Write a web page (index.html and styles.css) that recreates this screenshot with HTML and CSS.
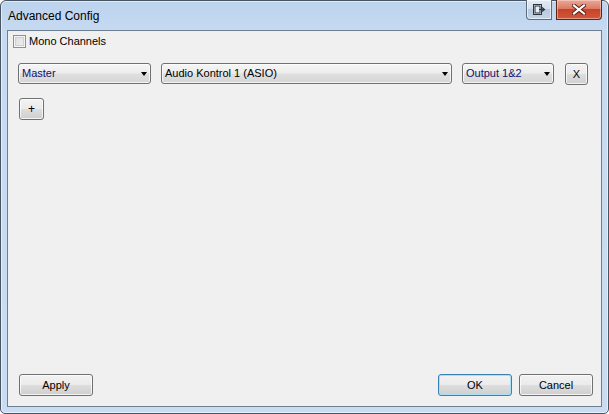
FILE: index.html
```html
<!DOCTYPE html>
<html>
<head>
<meta charset="utf-8">
<link rel="stylesheet" href="styles.css">
</head>
<body>
<div class="window">
  <div class="titlebar">
    <span class="title">Advanced Config</span>
    <div class="caption-buttons">
      <div class="cap-btn cap-extra">
        <svg width="13" height="11" viewBox="0 0 13 11">
          <rect x="0.5" y="0.5" width="8" height="10" fill="#e9eef5" stroke="#2b3440"/>
          <rect x="2" y="2" width="5" height="7" fill="none" stroke="#2b3440"/>
          <path d="M6 5.5 H11 M9 3.5 L11.5 5.5 L9 7.5" fill="none" stroke="#2b3440" stroke-width="1.2"/>
        </svg>
      </div>
      <div class="cap-btn cap-close">
        <svg width="14" height="11" viewBox="0 0 14 11">
          <path d="M2 1.5 L12 9.5 M12 1.5 L2 9.5" stroke="#5a1a12" stroke-width="4" stroke-linecap="square"/>
          <path d="M2 1.5 L12 9.5 M12 1.5 L2 9.5" stroke="#ffffff" stroke-width="2.2" stroke-linecap="square"/>
        </svg>
      </div>
    </div>
  </div>
  <div class="client">
    <label class="check-row">
      <span class="checkbox"></span>
      <span class="check-label">Mono Channels</span>
    </label>
    <div class="combo-row">
      <div class="combo combo-master navy"><span>Master</span><span class="arrow"></span></div>
      <div class="combo combo-device"><span>Audio Kontrol 1 (ASIO)</span><span class="arrow"></span></div>
      <div class="combo combo-output navy"><span>Output 1&amp;2</span><span class="arrow"></span></div>
      <div class="btn btn-x">X</div>
    </div>
    <div class="plus-row">
      <div class="btn btn-plus">+</div>
    </div>
    <div class="bottom-row">
      <div class="btn btn-wide">Apply</div>
      <div class="spacer"></div>
      <div class="btn btn-wide btn-default">OK</div>
      <div class="btn btn-wide">Cancel</div>
    </div>
  </div>
</div>
</body>
</html>
```

FILE: styles.css
```css
* { box-sizing: border-box; }
html, body {
  margin: 0;
  padding: 0;
  background: #ffffff;
}
body {
  font-family: "Liberation Sans", Arial, sans-serif;
  font-size: 11px;
  color: #000;
}
.window {
  width: 609px;
  height: 414px;
  border: 1px solid #4a5563;
  border-radius: 6px 6px 5px 5px;
  background: linear-gradient(to bottom, #bcd3ee 0px, #c6daf1 30px, #c9dcf2 100%);
  box-shadow: inset 0 0 0 1px rgba(255,255,255,0.55);
  padding: 0 6px 6px 6px;
  display: flex;
  flex-direction: column;
}
.titlebar {
  height: 29px;
  flex: none;
  display: flex;
  align-items: flex-start;
  padding-left: 1px;
}
.title {
  font-family: "Liberation Sans", Arial, sans-serif;
  font-size: 12px;
  line-height: 14px;
  margin-top: 8px;
  color: #000;
}
.caption-buttons {
  margin-left: auto;
  margin-top: -1px;
  display: flex;
  gap: 4px;
}
.cap-btn {
  height: 20px;
  display: flex;
  align-items: center;
  justify-content: center;
  border: 1px solid #5d6b7d;
  border-top: none;
}
.cap-extra {
  width: 26px;
  border-radius: 0 0 0 4px;
  background: linear-gradient(to bottom, #e3ebf5 0%, #d3dfed 45%, #b9c9dd 50%, #c5d5e8 100%);
  box-shadow: inset 0 0 0 1px rgba(255,255,255,0.6);
}
.cap-close {
  width: 46px;
  border-color: #5a2419;
  border-radius: 0 0 4px 0;
  background: linear-gradient(to bottom, #e9a99a 0%, #dc7b65 45%, #c8432a 50%, #d0583c 100%);
  box-shadow: inset 0 0 0 1px rgba(255,220,210,0.5);
}
.client {
  flex: 1;
  border: 1px solid #6f7f92;
  background: #f0f0f0;
  display: flex;
  flex-direction: column;
  padding: 4px 8px 10px 5px;
}
.check-row {
  display: flex;
  align-items: center;
  height: 13px;
  gap: 2px;
}
.checkbox {
  width: 13px;
  height: 13px;
  border: 1px solid #8e8f8f;
  background: linear-gradient(135deg, #dcdcdc 0%, #f0f0f0 100%);
  box-shadow: inset 0 0 0 1px #f4f4f4, inset 0 0 0 2px #cfcfcf;
}
.check-label {
  line-height: 13px;
  margin-left: 1px;
}
.combo-row {
  display: flex;
  align-items: flex-start;
  margin-top: 15px;
  margin-left: 5px;
}
.combo {
  height: 21px;
  border: 1px solid #707070;
  border-radius: 3px;
  background: linear-gradient(to bottom, #f6f6f6 0%, #ececec 48%, #dfdfdf 52%, #d6d6d6 100%);
  box-shadow: inset 0 0 0 1px rgba(255,255,255,0.7);
  display: flex;
  align-items: center;
  padding: 0 3px 0 3px;
  justify-content: space-between;
  line-height: 13px;
}
.navy { color: #10106a; }
.combo-master { width: 133px; }
.combo-device { width: 291px; margin-left: 10px; }
.combo-output { width: 92px; margin-left: 10px; }
.arrow {
  width: 0;
  height: 0;
  border-left: 3.5px solid transparent;
  border-right: 3.5px solid transparent;
  border-top: 4px solid #000;
  margin-top: 1px;
}
.btn {
  border: 1px solid #707070;
  border-radius: 3px;
  background: linear-gradient(to bottom, #f2f2f2 0%, #ebebeb 48%, #dddddd 52%, #cfcfcf 100%);
  box-shadow: inset 0 0 0 1px rgba(255,255,255,0.75);
  display: flex;
  align-items: center;
  justify-content: center;
  line-height: 13px;
  color: #000;
}
.btn-x {
  width: 23px;
  height: 22px;
  margin-left: 11px;
}
.plus-row {
  display: flex;
  margin-top: 13px;
  margin-left: 6px;
}
.btn-plus {
  width: 25px;
  height: 22px;
  font-size: 12px;
}
.bottom-row {
  margin-top: auto;
  display: flex;
  margin-left: 6px;
  gap: 7px;
}
.spacer { flex: 1; }
.btn-wide {
  width: 74px;
  height: 22px;
}
.btn-default {
  border-color: #3c7fb1;
  box-shadow: inset 0 0 0 1px #a9dff7;
}
```
